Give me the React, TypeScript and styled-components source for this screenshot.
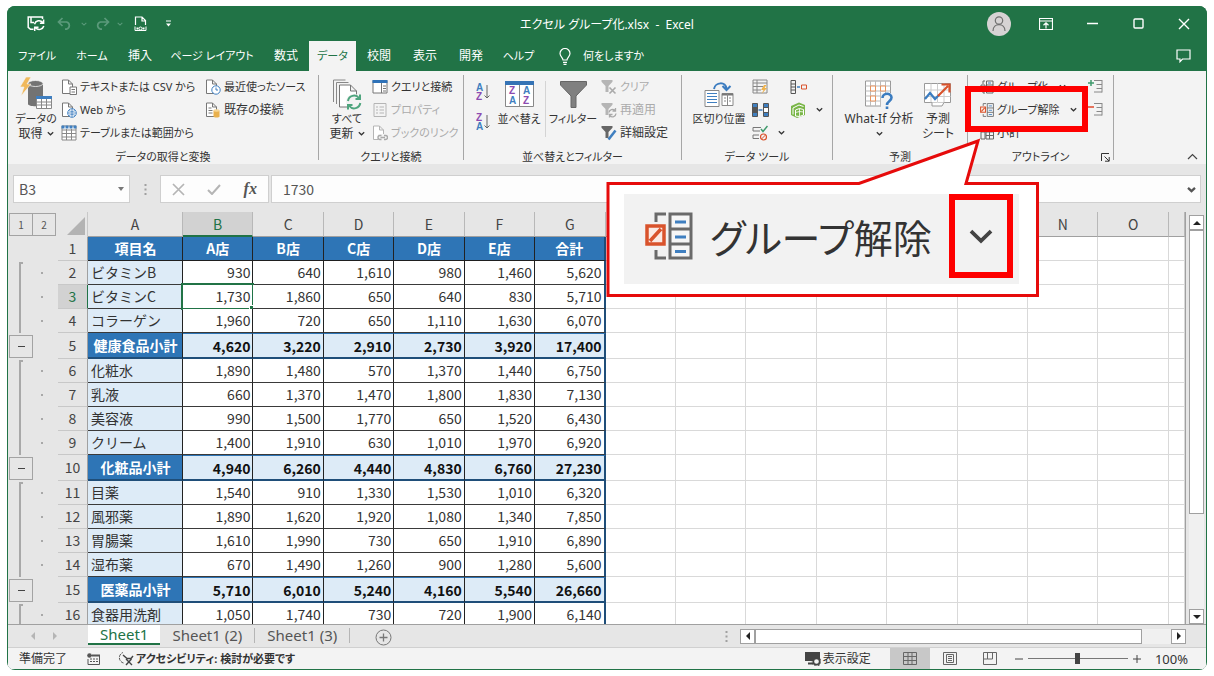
import React from "react";
import styled, { createGlobalStyle, css } from "styled-components";

const GREEN = "#217346";
const BLUE = "#2e75b6";
const PALE = "#ddebf7";
const INK = "#333333";
const CHROME = "#e6e6e6";
const RIBBON = "#f3f3f3";

const Global = createGlobalStyle`
  *, *::before, *::after { box-sizing: border-box; }
  body { margin: 0; background: #fff; }
  button, input {
    font: inherit; color: inherit; margin: 0; padding: 0; border: 0;
    background: none; font-feature-settings: inherit;
  }
  svg { display: block; flex: none; }
`;

/* ---------- window frame ---------- */

const Page = styled.div`
  height: 100vh;
  min-height: 480px;
  padding: 6px 7px;
  font-family: "Noto Sans", "Noto Sans CJK JP", sans-serif;
  font-size: 12px;
  line-height: 16px;
  color: ${INK};
`;

const Window = styled.div`
  position: relative;
  height: 100%;
  display: flex;
  flex-direction: column;
  border-radius: 8px;
  overflow: hidden;
  background: ${CHROME};
  box-shadow: inset 0 0 0 1px ${GREEN};
`;

const TitleBar = styled.header`
  display: grid;
  grid-template-columns: 1fr auto 1fr;
  align-items: center;
  height: 35px;
  background: ${GREEN};
  color: #fff;
  font-feature-settings: "palt";
`;

const QuickAccess = styled.div`
  display: flex;
  align-items: center;
  padding-left: 19px;
`;

const QuickButton = styled.button<{ $w: number; $faded?: boolean }>`
  display: flex;
  align-items: center;
  justify-content: center;
  width: ${(p) => p.$w}px;
  height: 24px;
  color: ${(p) => (p.$faded ? "#5b9a7b" : "#fff")};
`;

const Title = styled.h1`
  margin: 0;
  padding-top: 3px;
  font-size: 12px;
  font-weight: 400;
  white-space: pre;
`;

const Controls = styled.div`
  display: flex;
  justify-content: flex-end;
  align-items: center;
`;

const Avatar = styled.button`
  width: 24px;
  height: 24px;
  margin-right: 12px;
  border-radius: 50%;
  background: #d6d3d4;
  color: #6f6f6f;
`;

const ControlButton = styled.button`
  display: flex;
  align-items: center;
  justify-content: center;
  width: 46px;
  height: 32px;
  color: #fff;
`;

const TabBar = styled.nav`
  display: flex;
  height: 30px;
  padding-left: 2px;
  background: ${GREEN};
  color: #fff;
  font-feature-settings: "palt";
`;

const Tab = styled.button<{ $w: number; $active?: boolean; $kana?: boolean }>`
  width: ${(p) => p.$w}px;
  font-size: ${(p) => (p.$kana ? 11 : 12)}px;
  white-space: nowrap;
  ${(p) => p.$active && css`background: ${RIBBON}; color: ${GREEN};`}
`;

const TellMe = styled.button`
  display: flex;
  align-items: center;
  gap: 12px;
  padding-left: 16px;
  font-size: 11px;
`;

const CommentButton = styled.button`
  margin-left: auto;
  padding-right: 16px;
`;

/* ---------- ribbon ---------- */

const Ribbon = styled.section`
  display: flex;
  height: 93px;
  padding: 4px 0;
  margin: 0 1px;
  background: ${RIBBON};
  font-size: 11px;
  white-space: nowrap;
  font-feature-settings: "palt";
`;

const Group = styled.div<{ $w: number }>`
  flex: none;
  display: flex;
  flex-direction: column;
  width: ${(p) => p.$w}px;
  border-right: 1px solid #a6a6a6;
`;

const GroupBody = styled.div<{ $pad: number }>`
  flex: none;
  display: flex;
  height: 73px;
  padding-left: ${(p) => p.$pad}px;
`;

const LabelRow = styled.div`
  flex: none;
  position: relative;
  display: flex;
  align-items: center;
  justify-content: center;
  height: 18px;
`;

const Launcher = styled.button`
  position: absolute;
  right: 3px;
`;

const LargeButton = styled.button<{ $w: number; $kanji?: boolean }>`
  display: flex;
  flex-direction: column;
  align-items: center;
  justify-content: flex-start;
  width: ${(p) => p.$w}px;
  padding-top: 2px;
  font-size: ${(p) => (p.$kanji ? 12 : 11)}px;
  line-height: 15px;
`;

const LargeIcon = styled.span`
  display: flex;
  align-items: center;
  justify-content: center;
  height: 34px;
`;

const WithCaret = styled.span`
  display: flex;
  align-items: center;
  gap: 4px;
  height: 15px;
  font-size: 12px;
`;

const Stack = styled.div<{ $w: number; $pad?: number }>`
  display: flex;
  flex-direction: column;
  width: ${(p) => p.$w}px;
  padding-left: ${(p) => p.$pad ?? 0}px;
`;

const SmallButton = styled.button<{ $kanji?: boolean }>`
  display: flex;
  align-items: center;
  gap: 3px;
  height: 23px;
  font-size: ${(p) => (p.$kanji ? 12 : 11)}px;
  &:disabled { color: #ababab; }
`;

const Caret = styled.span`
  margin-left: 7px;
`;

const SortStack = styled.div`
  display: flex;
  flex-direction: column;
  gap: 12px;
  width: 27px;
  padding: 8px 0 0 8px;
`;

const ThinRule = styled.div`
  width: 1px;
  height: 56px;
  margin: 6px 3px 0 2px;
  background: #d4d4d4;
`;

const Collapse = styled.button`
  align-self: flex-end;
  margin: 0 8px 0 auto;
`;

/* ---------- formula bar ---------- */

const FormulaBar = styled.div`
  display: flex;
  align-items: center;
  height: 48px;
  padding: 2px 6px 0;
  font-family: "Noto Sans CJK JP", "Noto Sans", sans-serif;
  font-size: 14px;
  color: #555;
`;

const Box = styled.div`
  display: flex;
  align-items: center;
  height: 28px;
  background: #fdfdfd;
  border: 1px solid #cfcfcf;
`;

const NameBox = styled(Box)`
  width: 117px;
  padding: 0 5px;
`;

const BareInput = styled.input`
  flex: 1;
  min-width: 0;
  height: 24px;
  outline: 0;
`;

const Grip = styled.span`
  display: flex;
  justify-content: center;
  width: 30px;
`;

const FxBox = styled(Box)`
  width: 109px;
  justify-content: space-around;
  margin-right: 2px;
`;

const FxButton = styled.button`
  font-family: "Liberation Serif", serif;
  font-size: 16px;
  font-weight: 700;
  font-style: italic;
`;

const FormulaBox = styled(Box)`
  flex: 1;
  padding: 0 4px 0 11px;
`;

/* ---------- sheet ---------- */

const SheetArea = styled.main`
  flex: 1;
  min-height: 0;
  display: flex;
  overflow: hidden;
  margin: 0 1px;
  font-family: "Noto Sans CJK JP", sans-serif;
  font-size: 14px;
  border-bottom: 1px solid #a0a0a0;
`;

const Outline = styled.div`
  flex: none;
  width: 50px;
`;

const Levels = styled.div`
  display: flex;
  height: 25px;
  padding: 1px 0 1px 1px;
`;

const LevelButton = styled.button`
  width: 24px;
  height: 23px;
  margin-right: -1px;
  border: 1px solid #a3a3a3;
  font-size: 10px;
  color: #555;
`;

const OutlineRow = styled.div<{ $h: number }>`
  display: flex;
  align-items: flex-end;
  height: ${(p) => p.$h}px;
  padding-left: 1px;
`;

const Bracket = styled.span<{ $top?: boolean }>`
  align-self: flex-end;
  width: 4px;
  height: ${(p) => (p.$top ? "calc(100% - 1px)" : "100%")};
  margin: 0 0 0 10px;
  border-left: 2px solid #a8a8a8;
  ${(p) => p.$top && css`border-top: 2px solid #a8a8a8;`}
`;

const Dot = styled.span`
  align-self: center;
  width: 2px;
  height: 2px;
  margin-left: 18px;
  background: #a8a8a8;
`;

const CollapseGroup = styled.button`
  display: flex;
  align-items: center;
  justify-content: center;
  width: 24px;
  height: 23px;
  margin-bottom: 1px;
  border: 1px solid #a3a3a3;
`;

const Minus = styled.span`
  width: 7px;
  height: 1px;
  background: #444;
`;

const GridWrap = styled.div`
  flex: 1;
  min-width: 0;
  border-right: 1px solid #a0a0a0;
  overflow: hidden;
`;

const Grid = styled.table`
  width: 100%;
  table-layout: fixed;
  border-collapse: separate;
  border-spacing: 0;
  line-height: 18px;
`;

const ColHead = styled.th<{ $sel?: boolean }>`
  height: 25px;
  padding: 0;
  font-weight: 400;
  color: ${(p) => (p.$sel ? GREEN : "#444")};
  background: ${(p) => (p.$sel ? "#d2d2d2" : "transparent")};
  border-right: 1px solid #b8b8b8;
  border-bottom: ${(p) => (p.$sel ? `2px solid ${GREEN}` : "1px solid #a0a0a0")};
`;

const Corner = styled.th`
  height: 25px;
  padding: 0 2px 2px 0;
  border-right: 1px solid #c8c8c8;
  vertical-align: bottom;
  svg { margin-left: auto; }
`;

const RowHead = styled.th<{ $sel?: boolean }>`
  padding: 0 0 2px;
  font-weight: 400;
  color: ${(p) => (p.$sel ? GREEN : "#444")};
  background: ${(p) => (p.$sel ? "#d2d2d2" : "transparent")};
  border-right: 1px solid ${(p) => (p.$sel ? GREEN : "#a0a0a0")};
  border-bottom: 1px solid #c8c8c8;
`;

const Row = styled.tr<{ $h: number }>`
  height: ${(p) => p.$h}px;
`;

type Kind = "head" | "item" | "sub";

const lineBelow = { head: "1px solid #1f1f1f", item: "1px solid #3a3a3a", sub: "2px solid #1f4e79" };

const NameCell = styled.td<{ $kind: Kind }>`
  padding: 0 2px ${(p) => (p.$kind === "sub" ? 0 : 2)}px 3px;
  white-space: nowrap;
  border-right: 1px solid #222;
  border-bottom: ${(p) => lineBelow[p.$kind]};
  background: ${(p) => (p.$kind === "item" ? PALE : BLUE)};
  ${(p) => p.$kind !== "item" && css`color: #fff; font-weight: 700; text-align: center;`}
`;

const ValueCell = styled.td<{ $kind: Kind; $last?: boolean }>`
  position: relative;
  padding: 0 2px 2px;
  text-align: right;
  border-right: ${(p) => (p.$last ? `2px solid #1f4e79` : "1px solid #222")};
  border-bottom: ${(p) => lineBelow[p.$kind]};
  background: #fff;
  ${(p) => p.$kind === "head" && css`background: ${BLUE}; color: #fff; font-weight: 700; text-align: center;`}
  ${(p) => p.$kind === "sub" && css`background: ${PALE}; color: #111; font-weight: 700; padding-bottom: 0; border-top: 1px solid ${BLUE};`}
`;

const Selection = styled.span`
  position: absolute;
  inset: -2px;
  border: 2px solid ${GREEN};
  &::after {
    content: "";
    position: absolute;
    right: -3px;
    bottom: -3px;
    width: 5px;
    height: 5px;
    background: ${GREEN};
    outline: 1px solid #fff;
  }
`;

const EmptyCell = styled.td`
  padding: 0;
  background: #fff;
  border-right: 1px solid #d9d9d9;
  border-bottom: 1px solid #d9d9d9;
`;

const VScroll = styled.div`
  flex: none;
  display: flex;
  flex-direction: column;
  width: 20px;
  padding: 3px 2px 0 3px;
`;

const ScrollButton = styled.button`
  flex: none;
  display: flex;
  align-items: center;
  justify-content: center;
  width: 15px;
  height: 15px;
  border: 1px solid #a0a0a0;
  background: #fff;
  color: #222;
`;

const VTrack = styled.div`
  flex: 1;
  width: 15px;
  background: #f0f0f0;
`;

const VThumb = styled.div`
  height: 75%;
  background: #fff;
  border: 1px solid #a0a0a0;
`;

/* ---------- sheet tabs and status bar ---------- */

const SheetTabs = styled.div`
  display: flex;
  height: 22px;
  margin: 0 1px;
  font-size: 15px;
  color: #555;
`;

const TabArrows = styled.div`
  display: flex;
  align-items: center;
  justify-content: center;
  gap: 14px;
  width: 80px;
  padding-right: 8px;
  color: #b5b5b5;
`;

const SheetTab = styled.button<{ $active?: boolean }>`
  height: 20px;
  padding: 0 12px;
  line-height: 18px;
  ${(p) =>
    p.$active &&
    css`
      background: #fff;
      color: ${GREEN};
      border-bottom: 2px solid ${GREEN};
    `}
`;

const TabRule = styled.span`
  width: 1px;
  height: 15px;
  margin-top: 3px;
  background: #b5b5b5;
`;

const AddSheet = styled.button`
  margin: 2px 0 0 25px;
  align-self: center;
`;

const HScroll = styled.div`
  display: flex;
  align-items: center;
  width: 466px;
  margin: 0 20px 0 auto;
`;

const HTrack = styled.div`
  flex: 1;
  height: 15px;
  background: #f0f0f0;
`;

const HThumb = styled.div`
  width: 93%;
  height: 15px;
  background: #fff;
  border: 1px solid #a0a0a0;
`;

const HGrip = styled.span`
  width: 15px;
  margin-left: 5px;
`;

const StatusBar = styled.footer`
  display: flex;
  align-items: center;
  height: 22px;
  margin: 0 1px 1px;
  padding: 0 18px 0 11px;
  border-top: 1px solid #d0d0d0;
  background: ${RIBBON};
  font-feature-settings: "palt";
`;

const StatusItem = styled.button<{ $gap: number; $strong?: boolean }>`
  display: flex;
  align-items: center;
  gap: 2px;
  margin-right: ${(p) => p.$gap}px;
  ${(p) => p.$strong && css`font-size: 11px; font-weight: 700;`}
`;

const Spacer = styled.span`
  flex: 1;
`;

const ViewButton = styled.button<{ $active?: boolean }>`
  display: flex;
  align-items: center;
  justify-content: center;
  width: 40px;
  height: 21px;
  color: #666;
  background: ${(p) => (p.$active ? "#c8c8c8" : "transparent")};
`;

const ZoomButton = styled.button`
  display: flex;
  align-items: center;
  justify-content: center;
  width: 18px;
  height: 20px;
`;

const ZoomSlider = styled.input`
  appearance: none;
  width: 100px;
  height: 20px;
  background: linear-gradient(#777, #777) center / 100% 1px no-repeat;
  &::-webkit-slider-thumb {
    appearance: none;
    width: 5px;
    height: 11px;
    background: #444;
  }
`;

const ZoomValue = styled.button`
  margin-left: 9px;
  font-size: 13px;
`;

/* ---------- annotation ---------- */

const Highlight = styled.div`
  position: absolute;
  left: 958px;
  top: 80px;
  width: 123px;
  height: 46px;
  border: 6px solid #fe0000;
  pointer-events: none;
`;

const Callout = styled.figure`
  position: absolute;
  left: 599px;
  top: 130px;
  width: 434px;
  height: 162px;
  margin: 0;
`;

const CalloutPanel = styled.div`
  position: absolute;
  left: 18px;
  top: 58px;
  display: flex;
  align-items: center;
  width: 395px;
  height: 90px;
  padding: 0 6px 6px 21px;
  background: #f2f2f2;
  font-family: "Noto Sans CJK JP", sans-serif;
  font-size: 39px;
  line-height: 56px;
  color: #333;
  font-feature-settings: "palt";
  white-space: nowrap;
`;

const CalloutText = styled.span`
  margin-left: 17px;
`;

const CalloutCaret = styled.span`
  display: flex;
  align-items: center;
  justify-content: center;
  width: 64px;
  height: 84px;
  margin-left: auto;
  border: 6px solid #fe0000;
  color: #444;
`;

/* ---------- icons ---------- */

type IconProps = { w: number; h?: number; children: React.ReactNode; vb?: string };
const Icon = ({ w, h = w, children, vb }: IconProps) => (
  <svg width={w} height={h} viewBox={vb ?? `0 0 ${w} ${h}`} fill="none" stroke="currentColor" aria-hidden="true">
    {children}
  </svg>
);

const Chevron = ({ s = 7, sw = 1.2 }: { s?: number; sw?: number }) => (
  <Icon w={s} h={s} vb="0 0 7 7"><path d="M.8 2.2 3.5 4.8 6.2 2.2" strokeWidth={sw} /></Icon>
);

const SaveIcon = () => (
  <Icon w={18} h={17}>
    <path d="M6.500 14.300H3.500L1.200 12.300V2h14.300v2M4 2.500v5h3" strokeWidth="1.500" />
    <path d="M7.500 9.200a4.700 4.700 0 0 1 8.200-1.700M16.600 4.500v3.700h-3.700M16.800 11a4.700 4.700 0 0 1-8.200 1.700M7.700 16v-3.800h3.800" strokeWidth="1.500" />
  </Icon>
);
const UndoIcon = ({ flip = false }) => (
  <Icon w={15} h={13}>
    <g transform={flip ? "translate(15 0) scale(-1 1)" : undefined}>
      <path d="M5.500 1 1.500 5l4 4M1.800 5h7.700a3.700 3.700 0 0 1 0 7.200H8" strokeWidth="1.700" />
    </g>
  </Icon>
);
const PrintDocIcon = () => (
  <Icon w={13} h={16}>
    <path d="M1.500 9V1h6.500l3.500 3.500V9M8 1v4h3.500" strokeWidth="1.200" />
    <path d="M1 10.500v4h11v-4" strokeWidth="1" />
    <path d="M2.500 12.500h2M8.500 12.500h2" strokeWidth="2" />
    <circle cx="6.500" cy="12.500" r="1.500" />
  </Icon>
);
const CustomizeIcon = () => (
  <Icon w={7} h={7}><path d="M1 1h5" /><path d="M1 3.500h5L3.500 6.500Z" fill="currentColor" stroke="none" /></Icon>
);
const UserIcon = () => (
  <Icon w={24}>
    <circle cx="12" cy="8.500" r="3.700" strokeWidth="1.200" /><path d="M6 19c0-8.500 12-8.500 12 0" strokeWidth="1.200" />
  </Icon>
);
const RibbonDisplayIcon = () => (
  <Icon w={14} h={12}><path d="M.5.5h13v11H.5zM.5 3h13M7 10.500V5M4.500 7.200 7 4.800l2.500 2.400" strokeWidth="1.200" /></Icon>
);
const BulbIcon = () => (
  <Icon w={12} h={17}>
    <path d="M4 12c0-2.500-3-3.600-3-6.500a5 5 0 0 1 10 0C11 8.400 8 9.500 8 12ZM4 14.300h4M4.500 16.300h3" strokeWidth="1.200" />
  </Icon>
);
const CommentIcon = () => (
  <Icon w={15} h={14}><path d="M1 1h13v9H6.500L4 12.700V10H1Z" strokeWidth="1.200" /></Icon>
);

const SheetOutline = ({ c = "#777" }: { c?: string }) => (
  <path d="M1.500 14.500V1h6l4 4v9.500ZM7.500 1v4h4" stroke={c} fill="#fff" />
);
const TextCsvIcon = () => (
  <Icon w={16}><SheetOutline /><path d="M9 8h6.500v7.500H9z" fill="#fff" stroke="#777" /><path d="M10.500 10.500h3.500M10.500 13h3.500" stroke="#777" /></Icon>
);
const WebIcon = () => (
  <Icon w={16}>
    <SheetOutline /><circle cx="11" cy="11" r="4.300" fill="#fff" stroke="#3f7fc0" />
    <path d="M7 11h8M11 7v8M8 8.700c2 1 4 1 6 0M8 13.300c2-1 4-1 6 0" stroke="#3f7fc0" strokeWidth=".8" />
  </Icon>
);
const TableIcon = () => (
  <Icon w={16}>
    <path d="M1 1h14v14H1z" fill="#fff" stroke="#888" /><path d="M1 5h14M1 8.500h14M1 12h14M5.500 4v11M10.500 4v11" stroke="#888" />
    <path d="M.5 2h15" stroke="#3f7fc0" strokeWidth="3" strokeDasharray="3 1" />
  </Icon>
);
const RecentIcon = () => (
  <Icon w={16}><SheetOutline /><circle cx="11" cy="11" r="4.200" fill="#fff" stroke="#3f7fc0" /><path d="M11 8.500V11h2" stroke="#3f7fc0" /></Icon>
);
const ExistingIcon = () => (
  <Icon w={16}>
    <SheetOutline /><path d="M3.500 6h3M3.500 8.500h4M3.500 11h4" stroke="#777" />
    <path d="M8.500 8.500v6c0 1.300 6 1.300 6 0v-6" fill="#e9b04c" stroke="none" />
    <ellipse cx="11.500" cy="8.500" rx="3" ry="1.300" fill="#f6d593" stroke="none" />
  </Icon>
);
const GetDataIcon = () => (
  <Icon w={34} h={34}>
    <path d="M9 7v20c0 3 15 3 15 0V7" fill="#737373" stroke="none" />
    <ellipse cx="16.500" cy="6.500" rx="7.500" ry="3" fill="#737373" stroke="#f3f3f3" strokeWidth=".8" />
    <path d="M7 0 1 10h4l-3 9 10-12H8l4-7Z" fill="#f0b95c" stroke="#f3f3f3" strokeWidth=".6" />
    <path d="M17.500 19.500h15v12h-15z" fill="#fff" stroke="#888" />
    <path d="M17.500 25h15M17.500 28h15M22.500 21v10.500M27.500 21v10.500" stroke="#888" />
    <path d="M17 20.500h16" stroke="#3f7fc0" strokeWidth="3" />
  </Icon>
);
const RefreshIcon = () => (
  <Icon w={30} h={32}>
    <path d="M1.500 24V2h12M4.500 26V4.500h12" stroke="#888" />
    <path d="M7.500 29V7h11l6 6v16ZM18.500 7v6h6" fill="#fff" stroke="#777" />
    <circle cx="22" cy="24" r="8" fill="#f3f3f3" stroke="none" />
    <path d="M16 23a6.200 6.200 0 0 1 11-3M28 16.500v4.500h-4.500M28.300 25a6.200 6.200 0 0 1-11 3M16 31.500V27h4.500" stroke="#4fa57e" strokeWidth="2" />
  </Icon>
);
const QueriesIcon = () => (
  <Icon w={16}><path d="M1 1.500h14v12.500H1z" fill="#fff" stroke="#777" /><path d="M.5 2.500h15" stroke="#2f72b8" strokeWidth="3" /><path d="M9.500 4v10M11 7h3M11 9.500h3M11 12h3" stroke="#777" /></Icon>
);
const PropsIcon = () => (
  <Icon w={16}><path d="M2 1.500h12v13H2z" stroke="#b5b5b5" /><path d="M4 5h2M7.500 5H12M4 8h2M7.500 8H12M4 11h2M7.500 11H12" stroke="#b5b5b5" /></Icon>
);
const LinksIcon = () => (
  <Icon w={16}><SheetOutline c="#b5b5b5" /><path d="M6 9h10v7H6z" fill="#f3f3f3" stroke="none" /><path d="M9.500 10.500H8a2 2 0 0 0 0 4h1.500M12 10.500h1.500a2 2 0 0 1 0 4H12M8.500 12.500h4.500" stroke="#aaa" strokeWidth="1.400" /></Icon>
);

const SortLetter = ({ ch, x, y }: { ch: "A" | "Z"; x: number; y: number }) => (
  <text
    x={x} y={y} stroke="none" fontSize="10" fontWeight="700"
    fill={ch === "A" ? "#3f7fc0" : "#8d4bb0"} fontFamily="Liberation Sans, sans-serif"
  >
    {ch}
  </text>
);
const SortIcon = ({ desc = false }) => (
  <Icon w={15} h={18}>
    <SortLetter ch={desc ? "Z" : "A"} x={0} y={8} />
    <SortLetter ch={desc ? "A" : "Z"} x={0} y={17} />
    <path d="M11 2v13M8.500 12.500 11 15l2.500-2.500" stroke="#666" />
  </Icon>
);
const SortBigIcon = () => (
  <Icon w={29} h={26}>
    <path d="M.5.5h28v25H.5z" fill="#fff" stroke="#888" /><path d="M0 2h29" stroke="#3573b5" strokeWidth="4" /><path d="M14.500 4v22" stroke="#888" />
    <SortLetter ch="Z" x={4} y={13} /><SortLetter ch="A" x={4} y={23} />
    <SortLetter ch="A" x={18} y={13} /><SortLetter ch="Z" x={18} y={23} />
  </Icon>
);
const FunnelBig = () => (
  <Icon w={27} h={27}><path d="M.5.500h26V4L16 15v11.500h-5V15L.5 4Z" fill="#808080" stroke="#666" /></Icon>
);
const FunnelSmall = ({ c }: { c: string }) => <path d="M.5 1h11v1.800L7.500 7v6h-3V7l-4-4.200Z" fill={c} stroke="none" />;
const ClearIcon = () => (
  <Icon w={16}><FunnelSmall c="#b5b5b5" /><path d="m8.500 8.500 6 6M14.500 8.500l-6 6" stroke="#aaa" strokeWidth="1.600" /></Icon>
);
const ReapplyIcon = () => (
  <Icon w={16}><FunnelSmall c="#b5b5b5" /><path d="M8 10.500a3.500 3.500 0 0 1 6-2M14.500 6v3h-3M15 11.500a3.500 3.500 0 0 1-6 2.200M8.500 15.500v-3h3" stroke="#aaa" strokeWidth="1.300" /></Icon>
);
const AdvancedIcon = () => (
  <Icon w={16}><FunnelSmall c="#666" /><path d="m7.500 14.500 7-9" stroke="#3f7fc0" strokeWidth="2.600" /></Icon>
);
const TextColumnsIcon = () => (
  <Icon w={30} h={27}>
    <path d="M1 9.500h14v16H1z" fill="#fff" stroke="#888" /><path d="M3 12.500h10M3 15.500h10M3 18.500h10M3 21.500h10" stroke="#3f7fc0" />
    <path d="M18 12.500h11v12H18z" fill="#fff" stroke="#888" /><path d="M18 13.500h11" stroke="#777" strokeWidth="2" /><path d="M23.500 13v11M20 17h2M20 20h2M25 17h2M25 20h2" stroke="#888" />
    <path d="M10 8C11 1 22 0 22.500 8M18.500 5l4 4 4-4" stroke="#3b7cc0" strokeWidth="2" />
  </Icon>
);
const FlashFillIcon = () => (
  <Icon w={16}><path d="M1 1h14v13H1zM1 4h14M1 7.500h10M1 11h8M5 1v13" stroke="#888" /><path d="m12 6-3 5h2.500L9.500 15l5.500-6h-2.500l2-3Z" fill="#efb24c" stroke="none" /></Icon>
);
const DuplicatesIcon = () => (
  <Icon w={17} h={16}>
    <path d="M.5 1.500h5v13h-5z" fill="#3f7fc0" stroke="#555" /><path d="M.5 5.500h5M.5 10.500h5" stroke="#555" /><path d="M1 8h4" stroke="#555" strokeWidth="4" />
    <path d="M11.500 1.500h5v13h-5z" stroke="#555" fill="#fff" /><path d="M12 3.500h4M12 12.500h4" stroke="#3f7fc0" strokeWidth="3" /><path d="M11.500 5.500h5M11.500 10.500h5" stroke="#555" />
    <path d="M6.500 8h4" stroke="#3f7fc0" strokeWidth="1.500" />
  </Icon>
);
const ValidationIcon = () => (
  <Icon w={16}>
    <path d="M9 2.500H1v3.500h7M7 10H1v3.500h6" stroke="#777" /><path d="m9 4 2 2.500L15.500 1" stroke="#3f9a6c" strokeWidth="1.500" />
    <circle cx="11.500" cy="12" r="3" stroke="#d9532c" strokeWidth="1.200" /><path d="m9.500 14 4-4" stroke="#d9532c" />
  </Icon>
);
const ConsolidateIcon = () => (
  <Icon w={17} h={16}><path d="M1 1.500h4.500v13H1zM1 5h4.500M1 8h4.500M1 11h4.500" stroke="#555" /><path d="M7 8h3" stroke="#3f7fc0" strokeWidth="1.500" /><path d="M11.500 6h5v4h-5z" stroke="#d9532c" /></Icon>
);
const DataModelIcon = () => (
  <Icon w={16}><path d="M1 4 9 .500 15 3v10l-8 3-6-3Z" fill="#7ab648" stroke="none" /><path d="M3 12.500V6l6-3 4.500 1.500" stroke="#fff" /><path d="M5.500 14V8l4-1.500 4 1V13l-4 1.500Z" stroke="#fff" /><path d="M5.500 10.500l4-1 4 .5M9.500 6.500v8" stroke="#fff" strokeWidth=".8" /></Icon>
);
const WhatIfIcon = () => (
  <Icon w={28} h={29}>
    <path d="M.5 1h25v25H.5z" fill="#fff" stroke="#999" /><path d="M.5 6h25M.5 11h25M.5 16h25M.5 21h25M5.500 1v25M10.500 1v25M15.500 1v25M20.500 1v25" stroke="#bbb" />
    <path d="M5.500 6h5v5h-5zM5.500 16h5v5h-5zM15.500 6h5v5h-5z" stroke="#e8925c" fill="#fff" />
    <path d="M16 13h12v16H16z" fill="#f3f3f3" stroke="none" />
    <path d="M17.500 18c0-5.500 9-5.500 9-.5 0 4-4.500 3.500-4.500 7.500M22 26.500V29" stroke="#3b7cc0" strokeWidth="2.600" />
  </Icon>
);
const ForecastIcon = () => (
  <Icon w={28} h={27}>
    <path d="M.5 2.500h26v19H.5z" fill="#fff" stroke="#999" /><path d="M.5 9h26M.5 15.500h26M7 2.500v19M13.500 2.500v19M20 2.500v19" stroke="#ccc" />
    <path d="m1 18 5-6 5 6 4-4" stroke="#3b7cc0" strokeWidth="2.200" /><path d="m14 15 10-10M17.500 3.500h8v8" stroke="#d9532c" strokeWidth="2.200" />
    <path d="M8 21.500V25h10l2-3.500" stroke="#999" fill="#fff" />
  </Icon>
);
const GroupIcon = () => (
  <Icon w={14}><path d="M5 1H3v3M3 10v3h2M1 5h4v4H1z" stroke="#666" /><path d="M6.500 1H13v12H6.500zM6.500 5H13M6.500 9H13" stroke="#666" /><path d="M8 3h3M8 7h3M8 11h3" stroke="#3f7fc0" /></Icon>
);
const UngroupIcon = ({ size = 14 }: { size?: number }) => (
  <Icon w={size} h={size} vb="0 0 48 48">
    <path d="M21 2H11v8M11 38v8h10" stroke="#6a6a6a" strokeWidth="3" />
    <path d="M25 2h21v44H25zM25 17h21M25 32h21" stroke="#6a6a6a" strokeWidth="3" fill="#f6f6f6" />
    <path d="M30 10h11M30 25h11M30 39.500h11" stroke="#3f7fc0" strokeWidth="3" />
    <path d="M2 14h17v18H2zM5 29 16 17" stroke="#d9532c" strokeWidth="3.500" fill="#fbeae4" />
  </Icon>
);
const SubtotalIcon = () => (
  <Icon w={14}><path d="M6 2h7.500v11H6zM6 6h7.500M6 9.500h7.500M9.500 2v11M1 6h4v7H1zM3 6V3h2" stroke="#666" /></Icon>
);
const DetailIcon = ({ hide = false }) => (
  <Icon w={15}>
    <path d={hide ? "M0 5h6" : "M0 4h6M3 1v6"} stroke={hide ? "#e04a2b" : "#3f9a6c"} strokeWidth="1.500" />
    <path d="M6 1.500h8M8.500 5.500H14M8.500 9.500H14M6 13h8M14 1v12.500" stroke="#888" />
  </Icon>
);
const LauncherIcon = () => (
  <Icon w={9}><path d="M.5 8V.500H8M3.500 3.500 8 8M8.200 4v4.200H4" /></Icon>
);
const ArrowGlyph = ({ d }: { d: string }) => <Icon w={8}><path d={d} fill="currentColor" stroke="none" /></Icon>;
const UP = "M0 6h8L4 2Z";
const DOWN = "M0 2h8L4 6Z";
const LEFT = "M6 0v8L2 4Z";
const RIGHT = "M2 0v8L6 4Z";
const DotsIcon = () => (
  <Icon w={3} h={13}><path d="M1.500 1v2M1.500 5.500v2M1.500 10v2" stroke="#a0a0a0" strokeWidth="2" /></Icon>
);
const MacroIcon = () => (
  <Icon w={13} h={12}><path d="M2 2.500h10.500v9H1V6" stroke="#555" /><path d="M5 2.500h8" stroke="#555" strokeWidth="2" /><circle cx="2.500" cy="2.500" r="2.300" fill="#555" stroke="none" /><path d="M3 6h8M3 8.500h8" stroke="#555" strokeDasharray="2 1" /></Icon>
);
const AccessIcon = () => (
  <Icon w={16} h={15}><path d="M5.500 12A5.500 5.500 0 0 1 5 1.500" stroke="#555" strokeDasharray="3 1" /><path d="m5 4 4 3.500h4L15 5M8 8l6 6M13.500 8 8 14" stroke="#444" strokeWidth="1.400" /></Icon>
);
const DisplayIcon = () => (
  <Icon w={16} h={15}><path d="M0 1h15v9H0z" fill="#444" stroke="none" /><path d="M3 12.500h5" stroke="#444" strokeWidth="2" /><circle cx="11.500" cy="10.500" r="3.200" fill="#f3f3f3" stroke="#444" strokeWidth="1.700" /><circle cx="11.500" cy="10.500" r="4.600" stroke="#444" strokeDasharray="2 1.600" /></Icon>
);

/* ---------- data ---------- */

type SheetRow = { kind: Kind; name: string; values: string[] };
const row = (kind: Kind, name: string, values: string): SheetRow => ({ kind, name, values: values.split(" ") });

const rows: SheetRow[] = [
  row("head", "項目名", "A店 B店 C店 D店 E店 合計"),
  row("item", "ビタミンB", "930 640 1,610 980 1,460 5,620"),
  row("item", "ビタミンC", "1,730 1,860 650 640 830 5,710"),
  row("item", "コラーゲン", "1,960 720 650 1,110 1,630 6,070"),
  row("sub", "健康食品小計", "4,620 3,220 2,910 2,730 3,920 17,400"),
  row("item", "化粧水", "1,890 1,480 570 1,370 1,440 6,750"),
  row("item", "乳液", "660 1,370 1,470 1,800 1,830 7,130"),
  row("item", "美容液", "990 1,500 1,770 650 1,520 6,430"),
  row("item", "クリーム", "1,400 1,910 630 1,010 1,970 6,920"),
  row("sub", "化粧品小計", "4,940 6,260 4,440 4,830 6,760 27,230"),
  row("item", "目薬", "1,540 910 1,330 1,530 1,010 6,320"),
  row("item", "風邪薬", "1,890 1,620 1,920 1,080 1,340 7,850"),
  row("item", "胃腸薬", "1,610 1,990 730 650 1,910 6,890"),
  row("item", "湿布薬", "670 1,490 1,260 900 1,280 5,600"),
  row("sub", "医薬品小計", "5,710 6,010 5,240 4,160 5,540 26,660"),
  row("item", "食器用洗剤", "1,050 1,740 730 720 1,900 6,140"),
];
/* Columns H to M lie under the callout and carry no letter. */
const columns = ["A", "B", "C", "D", "E", "F", "G", "", "", "", "", "", "", "N", "O"];
const blanks = columns.slice(7);
const rowHeight = (kind: Kind) => (kind === "sub" ? 26 : 24);

const tabs: { name: string; w: number; kana?: boolean }[] = [
  { name: "ファイル", w: 56, kana: true },
  { name: "ホーム", w: 54, kana: true },
  { name: "挿入", w: 42 },
  { name: "ページ レイアウト", w: 102, kana: true },
  { name: "数式", w: 46 },
  { name: "データ", w: 47, kana: true },
  { name: "校閲", w: 46 },
  { name: "表示", w: 46 },
  { name: "開発", w: 46 },
  { name: "ヘルプ", w: 49, kana: true },
];

/* ---------- sections ---------- */

const RibbonGroup = ({ w, pad, label, launcher, children }: {
  w: number; pad: number; label: string; launcher?: boolean; children: React.ReactNode;
}) => (
  <Group $w={w}>
    <GroupBody $pad={pad}>{children}</GroupBody>
    <LabelRow>
      <span>{label}</span>
      {launcher && <Launcher aria-label="詳細"><LauncherIcon /></Launcher>}
    </LabelRow>
  </Group>
);

const Small = ({ icon, text, caret, disabled, kanji }: {
  icon: React.ReactNode; text?: string; caret?: boolean; disabled?: boolean; kanji?: boolean;
}) => (
  <SmallButton disabled={disabled} $kanji={kanji}>
    {icon}
    {text}
    {caret && <Caret><Chevron /></Caret>}
  </SmallButton>
);

const RibbonPanel = () => (
  <Ribbon>
    <RibbonGroup w={311} pad={4} label="データの取得と変換">
      <LargeButton $w={48}>
        <LargeIcon><GetDataIcon /></LargeIcon>
        データの
        <WithCaret>取得 <Chevron /></WithCaret>
      </LargeButton>
      <Stack $w={145} $pad={1}>
        <Small icon={<TextCsvIcon />} text="テキストまたは CSV から" />
        <Small icon={<WebIcon />} text="Web から" />
        <Small icon={<TableIcon />} text="テーブルまたは範囲から" />
      </Stack>
      <Stack $w={110}>
        <Small icon={<RecentIcon />} text="最近使ったソース" />
        <Small icon={<ExistingIcon />} text="既存の接続" kanji />
      </Stack>
    </RibbonGroup>
    <RibbonGroup w={145} pad={4} label="クエリと接続">
      <LargeButton $w={48}>
        <LargeIcon><RefreshIcon /></LargeIcon>
        すべて
        <WithCaret>更新 <Chevron /></WithCaret>
      </LargeButton>
      <Stack $w={90} $pad={1}>
        <Small icon={<QueriesIcon />} text="クエリと接続" />
        <Small icon={<PropsIcon />} text="プロパティ" disabled />
        <Small icon={<LinksIcon />} text="ブックのリンク" disabled />
      </Stack>
    </RibbonGroup>
    <RibbonGroup w={218} pad={4} label="並べ替えとフィルター">
      <SortStack>
        <button aria-label="昇順"><SortIcon /></button>
        <button aria-label="降順"><SortIcon desc /></button>
      </SortStack>
      <LargeButton $w={48}>
        <LargeIcon><SortBigIcon /></LargeIcon>
        並べ替え
      </LargeButton>
      <ThinRule />
      <LargeButton $w={48}>
        <LargeIcon><FunnelBig /></LargeIcon>
        フィルター
      </LargeButton>
      <Stack $w={70} $pad={4}>
        <Small icon={<ClearIcon />} text="クリア" disabled />
        <Small icon={<ReapplyIcon />} text="再適用" disabled kanji />
        <Small icon={<AdvancedIcon />} text="詳細設定" kanji />
      </Stack>
    </RibbonGroup>
    <RibbonGroup w={151} pad={8} label="データ ツール">
      <LargeButton $w={58}>
        <LargeIcon><TextColumnsIcon /></LargeIcon>
        区切り位置
      </LargeButton>
      <Stack $w={42} $pad={4}>
        <Small icon={<FlashFillIcon />} />
        <Small icon={<DuplicatesIcon />} />
        <Small icon={<ValidationIcon />} caret />
      </Stack>
      <Stack $w={36}>
        <Small icon={<ConsolidateIcon />} />
        <Small icon={<DataModelIcon />} caret />
      </Stack>
    </RibbonGroup>
    <RibbonGroup w={135} pad={7} label="予測">
      <LargeButton $w={78} $kanji>
        <LargeIcon><WhatIfIcon /></LargeIcon>
        What-If 分析
        <WithCaret><Chevron /></WithCaret>
      </LargeButton>
      <LargeButton $w={40} $kanji>
        <LargeIcon><ForecastIcon /></LargeIcon>
        <span>予測</span>
        <span>シート</span>
      </LargeButton>
    </RibbonGroup>
    <RibbonGroup w={146} pad={12} label="アウトライン" launcher>
      <Stack $w={108}>
        <Small icon={<GroupIcon />} text="グループ化" caret />
        <Small icon={<UngroupIcon />} text="グループ解除" caret />
        <Small icon={<SubtotalIcon />} text="小計" kanji />
      </Stack>
      <Stack $w={20}>
        <Small icon={<DetailIcon />} />
        <Small icon={<DetailIcon hide />} />
      </Stack>
    </RibbonGroup>
    <Collapse aria-label="リボンを折りたたむ">
      <Icon w={11} h={7}><path d="m1 6 4.500-4.500L10 6" stroke="#444" strokeWidth="1.200" /></Icon>
    </Collapse>
  </Ribbon>
);

const SheetGrid = () => (
  <SheetArea>
    <Outline>
      <Levels><LevelButton>1</LevelButton><LevelButton>2</LevelButton></Levels>
      {rows.map((r, i) => (
        <OutlineRow key={i} $h={rowHeight(r.kind)}>
          {r.kind === "sub" && <CollapseGroup aria-label={`${r.name}を折りたたむ`}><Minus /></CollapseGroup>}
          {r.kind === "item" && <><Bracket $top={rows[i - 1].kind !== "item"} /><Dot /></>}
        </OutlineRow>
      ))}
    </Outline>
    <GridWrap>
      <Grid>
        <colgroup>
          <col style={{ width: 30 }} />
          <col style={{ width: 95 }} />
          {columns.slice(1).map((_, i) => <col key={i} />)}
          <col style={{ width: 16 }} />
        </colgroup>
        <thead>
          <tr>
            <Corner><Icon w={18} h={18}><path d="M18 0v18H0Z" fill="#b3b3b3" stroke="none" /></Icon></Corner>
            {columns.map((c, i) => <ColHead key={i} $sel={c === "B"}>{c}</ColHead>)}
            <ColHead />
          </tr>
        </thead>
        <tbody>
          {rows.map((r, i) => (
            <Row key={i} $h={rowHeight(r.kind)}>
              <RowHead $sel={i === 2}>{i + 1}</RowHead>
              <NameCell $kind={r.kind}>{r.name}</NameCell>
              {r.values.map((v, j) => (
                <ValueCell key={j} $kind={r.kind} $last={j === 5}>
                  {v}
                  {i === 2 && j === 0 && <Selection />}
                </ValueCell>
              ))}
              {blanks.map((_, j) => <EmptyCell key={j} />)}
              <EmptyCell />
            </Row>
          ))}
        </tbody>
      </Grid>
    </GridWrap>
    <VScroll>
      <ScrollButton aria-label="上へ"><ArrowGlyph d={UP} /></ScrollButton>
      <VTrack><VThumb /></VTrack>
      <ScrollButton aria-label="下へ"><ArrowGlyph d={DOWN} /></ScrollButton>
    </VScroll>
  </SheetArea>
);

const UngroupCallout = () => (
  <Callout>
    <svg width="434" height="162" viewBox="0 0 434 162" aria-hidden="true">
      <path d="M2 47.500H253L372 5 360 47.500H431.500V159.500H2Z" fill="#fff" stroke="#e60b0b" strokeWidth="3" />
    </svg>
    <CalloutPanel>
      <UngroupIcon size={48} />
      <CalloutText>グループ解除</CalloutText>
      <CalloutCaret><Chevron s={26} sw={1} /></CalloutCaret>
    </CalloutPanel>
  </Callout>
);

export default function App() {
  return (
    <Page>
      <Global />
      <Window>
        <TitleBar>
          <QuickAccess>
            <QuickButton $w={20} aria-label="保存"><SaveIcon /></QuickButton>
            <QuickButton $w={36} $faded aria-label="元に戻す"><UndoIcon /></QuickButton>
            <QuickButton $w={4} $faded aria-label="元に戻す一覧"><Chevron s={6} /></QuickButton>
            <QuickButton $w={32} $faded aria-label="やり直し"><UndoIcon flip /></QuickButton>
            <QuickButton $w={4} $faded aria-label="やり直し一覧"><Chevron s={6} /></QuickButton>
            <QuickButton $w={37} aria-label="印刷プレビュー"><PrintDocIcon /></QuickButton>
            <QuickButton $w={18} aria-label="カスタマイズ"><CustomizeIcon /></QuickButton>
          </QuickAccess>
          <Title>{"エクセル グループ化.xlsx  -  Excel"}</Title>
          <Controls>
            <Avatar aria-label="アカウント"><UserIcon /></Avatar>
            <ControlButton aria-label="リボンの表示"><RibbonDisplayIcon /></ControlButton>
            <ControlButton aria-label="最小化"><Icon w={11}><path d="M0 5.500h11" strokeWidth="1.400" /></Icon></ControlButton>
            <ControlButton aria-label="最大化"><Icon w={11}><rect x="1" y="1" width="9" height="9" rx="1" strokeWidth="1.400" /></Icon></ControlButton>
            <ControlButton aria-label="閉じる"><Icon w={12}><path d="m1 1 10 10M11 1 1 11" strokeWidth="1.400" /></Icon></ControlButton>
          </Controls>
        </TitleBar>
        <TabBar>
          {tabs.map((t) => <Tab key={t.name} $w={t.w} $kana={t.kana} $active={t.name === "データ"}>{t.name}</Tab>)}
          <TellMe><BulbIcon />何をしますか</TellMe>
          <CommentButton aria-label="コメント"><CommentIcon /></CommentButton>
        </TabBar>
        <RibbonPanel />
        <FormulaBar>
          <NameBox>
            <BareInput aria-label="名前ボックス" defaultValue="B3" />
            <Icon w={6} h={4}><path d="M0 0h6L3 4Z" fill="#777" stroke="none" /></Icon>
          </NameBox>
          <Grip><DotsIcon /></Grip>
          <FxBox>
            <button aria-label="キャンセル"><Icon w={13}><path d="m1 1 11 11M12 1 1 12" stroke="#b5b5b5" strokeWidth="1.700" /></Icon></button>
            <button aria-label="入力"><Icon w={14} h={11}><path d="m1 6 4 4 8-9" stroke="#b5b5b5" strokeWidth="2" /></Icon></button>
            <FxButton>fx</FxButton>
          </FxBox>
          <FormulaBox>
            <BareInput aria-label="数式バー" defaultValue="1730" />
            <Chevron s={9} sw={1.8} />
          </FormulaBox>
        </FormulaBar>
        <SheetGrid />
        <SheetTabs>
          <TabArrows><ArrowGlyph d={LEFT} /><ArrowGlyph d={RIGHT} /></TabArrows>
          <SheetTab $active>Sheet1</SheetTab>
          <SheetTab>Sheet1 (2)</SheetTab>
          <TabRule />
          <SheetTab>Sheet1 (3)</SheetTab>
          <TabRule />
          <AddSheet aria-label="新しいシート">
            <Icon w={17}><circle cx="8.500" cy="8.500" r="7.500" stroke="#777" /><path d="M8.500 4.500v8M4.500 8.500h8" stroke="#777" strokeWidth="1.300" /></Icon>
          </AddSheet>
          <HScroll>
            <HGrip><DotsIcon /></HGrip>
            <ScrollButton aria-label="左へ"><ArrowGlyph d={LEFT} /></ScrollButton>
            <HTrack><HThumb /></HTrack>
            <ScrollButton aria-label="右へ"><ArrowGlyph d={RIGHT} /></ScrollButton>
          </HScroll>
        </SheetTabs>
        <StatusBar>
          <StatusItem $gap={20}>準備完了</StatusItem>
          <StatusItem $gap={18} aria-label="マクロの記録"><MacroIcon /></StatusItem>
          <StatusItem $gap={0} $strong><AccessIcon />アクセシビリティ: 検討が必要です</StatusItem>
          <Spacer />
          <StatusItem $gap={19}><DisplayIcon />表示設定</StatusItem>
          <ViewButton $active aria-label="標準"><Icon w={14} h={13}><path d="M.5.500h13v12H.5zM.5 4.500h13M.5 8.500h13M5 .500v12M9 .500v12" /></Icon></ViewButton>
          <ViewButton aria-label="ページ レイアウト"><Icon w={14} h={13}><path d="M.5.500h13v12H.5zM3.500 2.500h7v8h-7zM5 4.500h4M5 6.500h4M5 8.500h4" /></Icon></ViewButton>
          <ViewButton aria-label="改ページ プレビュー"><Icon w={14} h={13}><path d="M.5.500h13v12H.5zM4.500 .500v6.500h5V.500M.5 7h4" /></Icon></ViewButton>
          <ZoomButton aria-label="縮小"><Icon w={8}><path d="M0 4h8" stroke="#444" /></Icon></ZoomButton>
          <ZoomSlider type="range" min={0} max={100} defaultValue={50} aria-label="ズーム" />
          <ZoomButton aria-label="拡大"><Icon w={8}><path d="M0 4h8M4 0v8" stroke="#444" /></Icon></ZoomButton>
          <ZoomValue>100%</ZoomValue>
        </StatusBar>
        <Highlight />
        <UngroupCallout />
      </Window>
    </Page>
  );
}
